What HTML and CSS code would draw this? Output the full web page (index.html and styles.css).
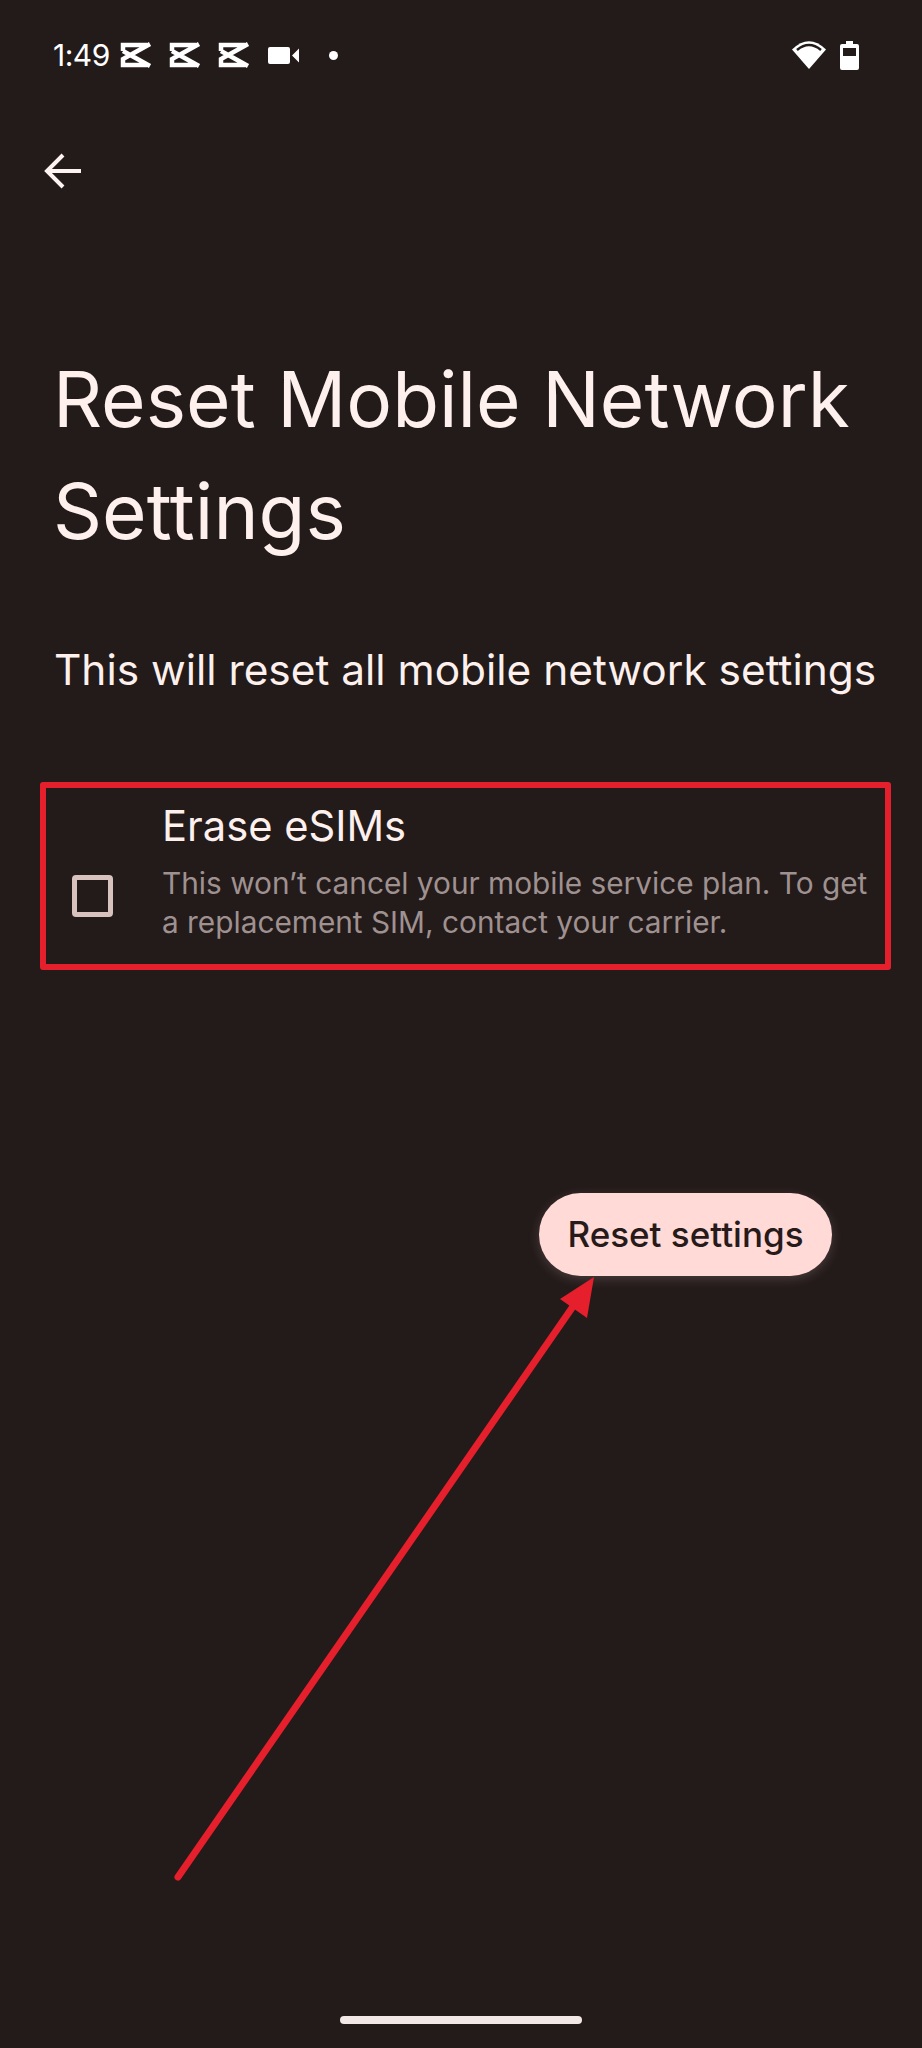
FILE: index.html
```html
<!DOCTYPE html>
<html lang="en">
<head>
    <meta charset="UTF-8">
    <meta name="viewport" content="width=device-width, initial-scale=1.0">
    <title>Reset Mobile Network Settings</title>
    <link rel="stylesheet" href="styles.css">
</head>
<body>
    <div class="status-bar">
        <span class="clock">1:49</span>
        <svg class="cut-icon" viewBox="0 0 32 26"><path d="M3 9V3H27M30 2L3 17V23H27M3 9L30 24" fill="none" stroke="#fff" stroke-width="4.500"/></svg>
        <svg class="cut-icon" viewBox="0 0 32 26"><path d="M3 9V3H27M30 2L3 17V23H27M3 9L30 24" fill="none" stroke="#fff" stroke-width="4.500"/></svg>
        <svg class="cut-icon" viewBox="0 0 32 26"><path d="M3 9V3H27M30 2L3 17V23H27M3 9L30 24" fill="none" stroke="#fff" stroke-width="4.500"/></svg>
        <svg class="video-icon" viewBox="0 0 32 17"><path d="M2 0H20Q22 0 22 2V15Q22 17 20 17H2Q0 17 0 15V2Q0 0 2 0ZM24 8.500L31 1.500V15.500Z" fill="#fff"/></svg>
        <span class="dot"></span>
        <span class="status-right">
            <svg class="wifi-icon" viewBox="0 0 34 28"><path d="M0 8.500Q17 -8 34 8.500L17 28Z" fill="#fff"/><path d="M5 9Q17 -1 29 9" fill="none" stroke="#231a1a" stroke-width="2.500"/></svg>
            <svg class="battery-icon" viewBox="0 0 19 29"><path d="M6 0H13V3H17Q19 3 19 5V27Q19 29 17 29H2Q0 29 0 27V5Q0 3 2 3H6ZM3 7V15H16V7Z" fill="#fff" fill-rule="evenodd"/></svg>
        </span>
    </div>

    <svg class="back-icon" viewBox="0 0 38 36"><path d="M37 18H3M19 2L3 18L19 34" fill="none" stroke="#fdf3f1" stroke-width="4"/></svg>

    <h1 class="title">Reset Mobile Network Settings</h1>
    <p class="intro">This will reset all mobile network settings</p>

    <div class="erase-box">
        <span class="checkbox"></span>
        <div class="erase-text">
            <div class="erase-title">Erase eSIMs</div>
            <div class="erase-desc">This won’t cancel your mobile service plan. To get a replacement SIM, contact your carrier.</div>
        </div>
    </div>

    <div class="actions">
        <button class="reset-btn" type="button">Reset settings</button>
    </div>

    <svg class="arrow" viewBox="0 0 922 2048"><path d="M178 1877L574 1305" fill="none" stroke="#e51f2b" stroke-width="7" stroke-linecap="round"/><path d="M594 1277L587 1318L560 1299Z" fill="#e51f2b"/></svg>

    <div class="home-bar"></div>
</body>
</html>
```

FILE: styles.css
```css
html, body {
    height: 100%;
}
body {
    margin: 0;
    height: 2048px;
    position: relative;
    overflow: hidden;
    background-color: #231a1a;
    color: #fdf0ed;
    font-family: Inter, Arial, sans-serif;
}
.status-bar {
    display: flex;
    align-items: center;
    height: 30px;
    padding: 40px 63px 0 53px;
}
.clock {
    width: 67px;
    font-size: 30px;
    color: #fff;
    letter-spacing: -0.5px;
}
.cut-icon {
    width: 32px;
    height: 26px;
    margin-right: 17px;
}
.video-icon {
    width: 32px;
    height: 17px;
    margin-left: 1px;
}
.dot {
    width: 9px;
    height: 9px;
    margin-left: 29px;
    border-radius: 50%;
    background: #fff;
}
.status-right {
    margin-left: auto;
    display: flex;
    align-items: center;
    gap: 14px;
}
.wifi-icon {
    width: 34px;
    height: 28px;
}
.battery-icon {
    width: 19px;
    height: 29px;
}
.back-icon {
    display: block;
    width: 38px;
    height: 36px;
    margin: 83px 0 0 44px;
}
.title {
    margin: 154px 20px 0 53px;
    font-size: 76.5px;
    font-weight: 400;
    line-height: 112px;
}
.intro {
    margin: 73px 0 0 54px;
    font-size: 42.4px;
    line-height: 60px;
    white-space: nowrap;
}
.erase-box {
    display: flex;
    align-items: center;
    box-sizing: border-box;
    width: 851px;
    height: 188px;
    margin: 82px 0 0 40px;
    border: 6px solid #e51f2b;
    border-radius: 3px;
    padding-left: 26px;
}
.checkbox {
    flex: none;
    box-sizing: border-box;
    width: 41px;
    height: 42px;
    margin-top: 39px;
    border: 5px solid #d8c2be;
    border-radius: 4px;
}
.erase-text {
    margin-left: 49px;
    width: 716px;
    padding-bottom: 11px;
}
.erase-title {
    font-size: 41.7px;
    line-height: 52px;
}
.erase-desc {
    margin-top: 12px;
    font-size: 29.8px;
    line-height: 39px;
    color: #9f9190;
}
.actions {
    margin: 223px 90px 0 0;
    display: flex;
    justify-content: flex-end;
}
.reset-btn {
    width: 293px;
    height: 83px;
    padding: 0 0 2px;
    border: none;
    border-radius: 42px;
    background: #ffdad6;
    color: #271a1a;
    font-family: inherit;
    font-size: 35px;
    font-weight: 500;
    box-shadow: 0 3px 12px rgba(255, 218, 214, 0.18);
}
.arrow {
    position: absolute;
    left: 0;
    top: 0;
    width: 922px;
    height: 2048px;
}
.home-bar {
    position: absolute;
    left: 340px;
    bottom: 24px;
    width: 242px;
    height: 8px;
    border-radius: 4px;
    background: #f2e9e7;
}
```
